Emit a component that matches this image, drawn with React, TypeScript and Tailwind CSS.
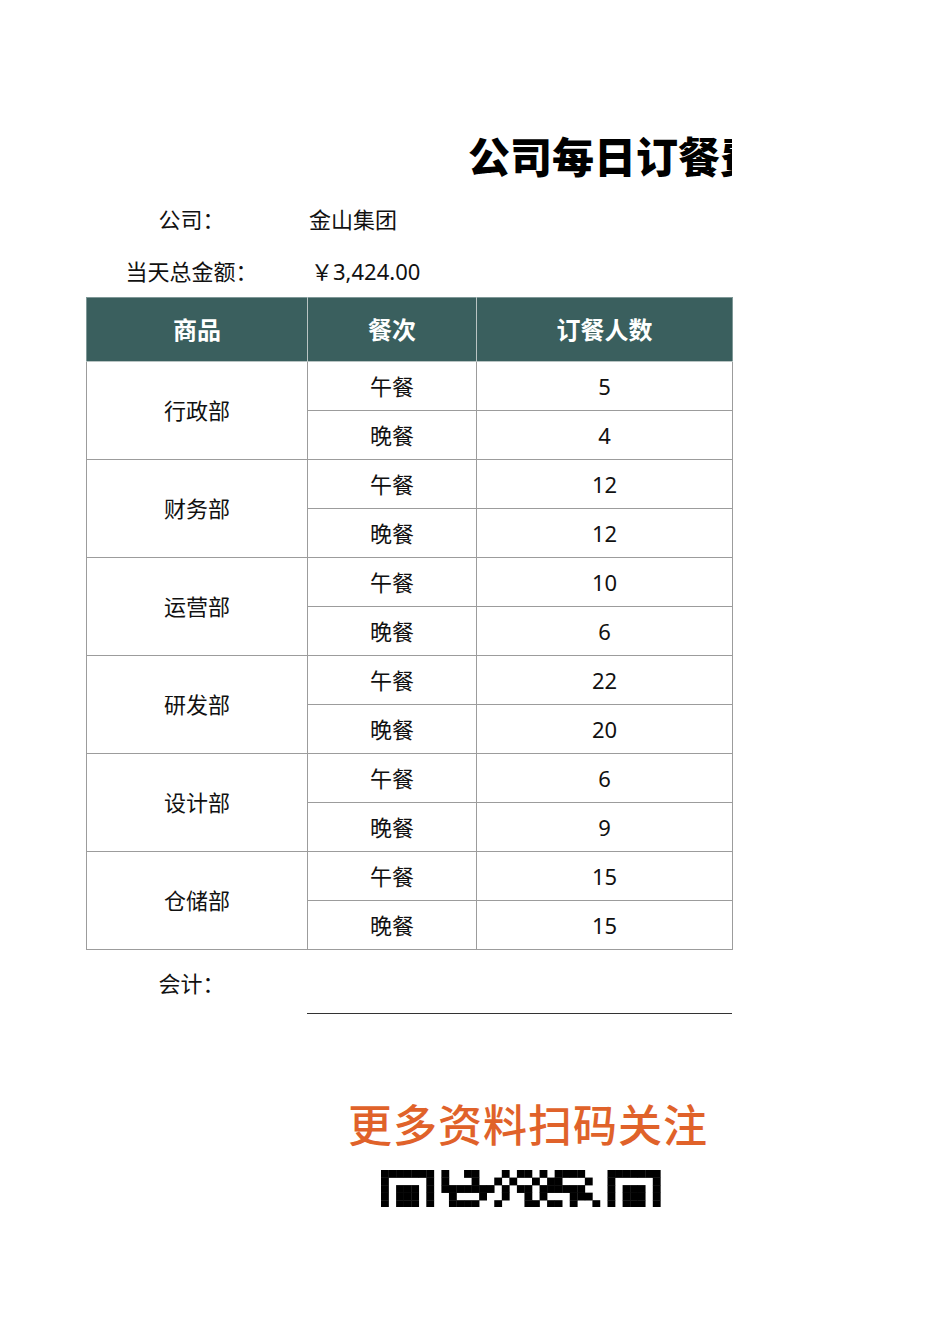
import React from "react";

const depts = [
  { name: "行政部", lunch: 5, dinner: 4 },
  { name: "财务部", lunch: 12, dinner: 12 },
  { name: "运营部", lunch: 10, dinner: 6 },
  { name: "研发部", lunch: 22, dinner: 20 },
  { name: "设计部", lunch: 6, dinner: 9 },
  { name: "仓储部", lunch: 15, dinner: 15 },
];

// top rows of the QR code (only part of it shows on the page)
const qrRows = [
  "1111111010011000101101011110001111111",
  "1000001010001001010010110001001000001",
  "1011101011111110101101111110001011101",
  "1011101001000100100101000111001011101",
  "1011101001111001000110110100101011101",
  "1000001000100101101011010110001000001",
];

function QrTop() {
  const m = 7.55;
  return (
    <svg width="280" height="37" viewBox="0 0 280 37">
      {qrRows.map((row, y) =>
        row.split("").map((c, x) =>
          c === "1" ? (
            <rect key={`${x}-${y}`} x={x * m} y={y * m} width={m + 0.3} height={m + 0.3} fill="#000" />
          ) : null
        )
      )}
    </svg>
  );
}

const cell = "border border-[#9c9c9c] text-center align-middle";

export default function App() {
  return (
    <div
      className="w-[950px] h-[1344px] bg-white text-[#111] overflow-hidden"
      style={{ fontFamily: '"Noto Sans", "Noto Sans CJK SC", sans-serif' }}
    >
      <div className="ml-[86px] w-[646px] pt-[129px]">
        <div className="h-[56px] overflow-hidden whitespace-nowrap pl-[382px]">
          <span className="text-[42px] leading-[56px] font-black text-black">
            公司每日订餐费用统计表
          </span>
        </div>

        <div className="mt-[8px] flex h-[52px] items-center text-[22px]">
          <div className="w-[221px] text-center pr-[10px]">公司：</div>
          <div className="pl-[2px]">金山集团</div>
        </div>
        <div className="flex h-[52px] items-center text-[22px]">
          <div className="w-[221px] text-center pr-[10px]">当天总金额：</div>
          <div className="pl-[4px]">￥3,424.00</div>
        </div>

        <table className="table-fixed border-collapse w-[646px] text-[22px]">
          <colgroup>
            <col className="w-[221px]" />
            <col className="w-[169px]" />
            <col className="w-[256px]" />
          </colgroup>
          <thead>
            <tr className="h-[64px] bg-[#3a5f5e] text-white font-bold text-[24px]">
              <th className="border border-[#b9c4c3] border-t-[#7f9897] border-l-[#7f9897]">商品</th>
              <th className="border border-[#b9c4c3] border-t-[#7f9897]">餐次</th>
              <th className="border border-[#b9c4c3] border-t-[#7f9897] border-r-[#7f9897]">订餐人数</th>
            </tr>
          </thead>
          <tbody>
            {depts.map((d) => (
              <React.Fragment key={d.name}>
                <tr className="h-[49px]">
                  <td rowSpan={2} className={cell}>{d.name}</td>
                  <td className={cell}>午餐</td>
                  <td className={cell}>{d.lunch}</td>
                </tr>
                <tr className="h-[49px]">
                  <td className={cell}>晚餐</td>
                  <td className={cell}>{d.dinner}</td>
                </tr>
              </React.Fragment>
            ))}
          </tbody>
        </table>

        <div className="flex h-[64px]">
          <div className="w-[221px] pt-[18px] text-center text-[22px] leading-[30px] pr-[10px]">会计：</div>
          <div className="w-[425px] border-b border-[#333]" />
        </div>
      </div>

      <div className="mt-[82px] ml-[348px] text-[44px] leading-[58px] font-medium text-[#e0622a] tracking-[1px] whitespace-nowrap">
        更多资料扫码关注
      </div>
      <div className="mt-[16px] ml-[381px] h-[37px] overflow-hidden">
        <QrTop />
      </div>
    </div>
  );
}
